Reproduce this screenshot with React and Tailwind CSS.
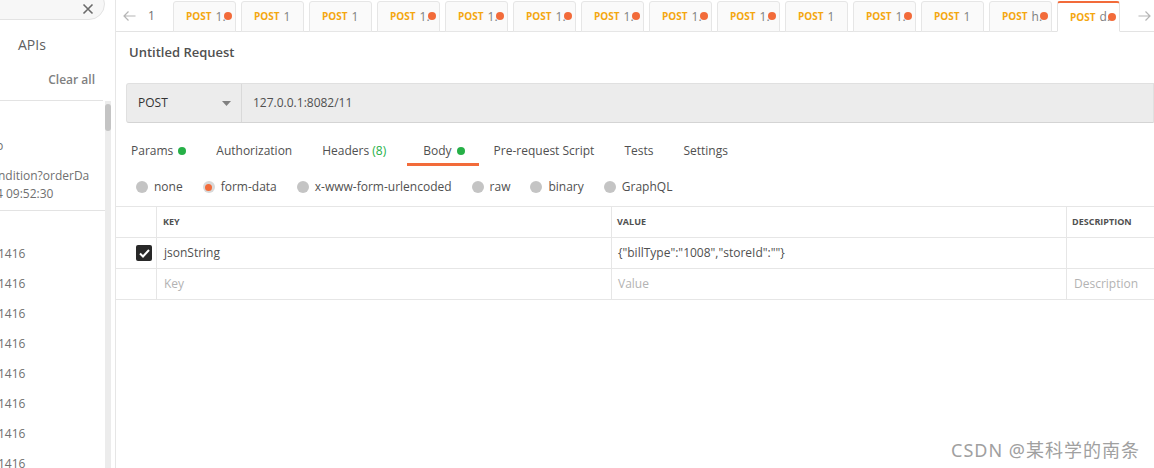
import React from "react";

const tabs = [
  { t: "1.", dot: true },
  { t: "1" },
  { t: "1" },
  { t: "1.", dot: true },
  { t: "1.", dot: true },
  { t: "1.", dot: true },
  { t: "1.", dot: true },
  { t: "1.", dot: true },
  { t: "1.", dot: true },
  { t: "1" },
  { t: "1.", dot: true },
  { t: "1" },
  { t: "h.", dot: true },
  { t: "d.", dot: true, active: true },
];

const Radio = ({ label, on }) => (
  <div className="flex items-center gap-[6px]">
    <span className={`w-[12px] h-[12px] rounded-full flex items-center justify-center ${on ? "bg-[#d9d9d9]" : "bg-[#c4c4c4]"}`}>
      {on && <span className="w-[7px] h-[7px] rounded-full bg-[#f26b3a]" />}
    </span>
    <span>{label}</span>
  </div>
);

export default function App() {
  return (
    <div className="w-[1154px] h-[468px] flex overflow-hidden bg-white text-[#505050]" style={{ fontFamily: '"Open Sans", "Noto Sans CJK SC", sans-serif' }}>
      {/* sidebar */}
      <div className="w-[116px] h-full shrink-0 border-r border-[#e6e6e6] flex flex-col overflow-hidden">
        <div className="shrink-0 -mt-[12px] -ml-[20px] mr-[10px] h-[32px] rounded-full border border-[#e3e3e3] bg-[#f7f7f7] flex items-end justify-end pr-[10px] pb-[4px]">
          <svg width="12" height="12" viewBox="0 0 12 12" className="text-[#6b6b6b]">
            <path d="M1.5 1.5 L10.5 10.5 M10.5 1.5 L1.5 10.5" stroke="currentColor" strokeWidth="1.6" />
          </svg>
        </div>
        <div className="shrink-0 pl-[18px] mt-[15px] text-[14px] text-[#606060] leading-[20px]">APIs</div>
        <div className="shrink-0 mt-[17px] pr-[20px] text-right text-[12px] font-semibold text-[#808080] leading-[16px]">Clear all</div>
        <div className="shrink-0 mt-[12px] mr-[12px] border-b border-[#e3e3e3]" />
        <div className="flex flex-1 min-h-0">
          <div className="flex-1 text-[12px] text-[#707070] overflow-hidden">
            <div className="mt-[36px] -ml-[4px] leading-[18px]">p</div>
            <div className="mt-[12px] -ml-[2px] leading-[18px] whitespace-nowrap">ndition?orderDa</div>
            <div className="-ml-[4px] leading-[18px] whitespace-nowrap">4 09:52:30</div>
            <div className="mt-[7px] border-b border-[#e3e3e3]" />
            <div className="mt-[34px] -ml-[2px] flex flex-col gap-[12px] leading-[18px]">
              {Array.from({ length: 8 }).map((_, i) => (
                <div key={i}>1416</div>
              ))}
            </div>
          </div>
          <div className="w-[6px] mr-[4px] bg-[#ececec] relative">
            <div className="absolute top-[3px] left-0 w-[6px] h-[27px] rounded-[3px] bg-[#c4c4c4]" />
          </div>
        </div>
      </div>

      {/* main */}
      <div className="flex-1 flex flex-col min-w-0">
        <div className="h-[32px] shrink-0 border-b border-[#e3e3e3] flex items-end">
          <div className="w-[57px] h-[31px] flex items-center gap-[12px] pl-[7px]">
            <svg width="13" height="12" viewBox="0 0 13 12" className="text-[#b5b5b5]">
              <path d="M12.5 6 H1 M5.5 1.5 L1 6 L5.5 10.5" stroke="currentColor" strokeWidth="1.2" fill="none" />
            </svg>
            <span className="text-[12px] text-[#707070]">1</span>
          </div>
          <div className="flex gap-[5px] -mb-[1px]">
            {tabs.map((tb, i) => (
              <div
                key={i}
                className={`w-[63px] h-[31px] rounded-t-[3px] border flex items-center pl-[12px] gap-[4px] ${
                  tb.active ? "bg-white border-[#e3e3e3] border-b-white border-t-[2px] border-t-[#f26b3a]" : "bg-[#fafafa] border-[#e6e6e6]"
                }`}
              >
                <span className="text-[10px] font-bold text-[#f4a70f]">POST</span>
                <span className="flex items-center text-[12px] text-[#808080]">
                  {tb.t}
                  {tb.dot && <span className="-ml-[2px] -mt-[1px] w-[8px] h-[8px] rounded-full bg-[#f26b3a]" />}
                </span>
              </div>
            ))}
          </div>
          <svg width="13" height="12" viewBox="0 0 13 12" className="text-[#b5b5b5] ml-[18px] mb-[9px]">
            <path d="M0.5 6 H12 M7.5 1.5 L12 6 L7.5 10.5" stroke="currentColor" strokeWidth="1.2" fill="none" />
          </svg>
        </div>

        <div className="pl-[13px] mt-[10px] text-[13px] font-semibold text-[#505050] leading-[20px]">Untitled Request</div>

        <div className="ml-[10px] mt-[21px] h-[40px] shrink-0 bg-[#ececec] border border-[#e0e0e0] border-b-[#d4d4d4] rounded-l-[3px] flex items-center text-[12px]">
          <div className="w-[115px] h-full flex items-center justify-between pl-[11px] pr-[10px] border-r border-[#d9d9d9]">
            <span className="text-[#333]">POST</span>
            <svg width="9" height="5" viewBox="0 0 9 5"><path d="M0 0 H9 L4.5 5Z" fill="#808080" /></svg>
          </div>
          <span className="pl-[11px] text-[#505050]">127.0.0.1:8082/11</span>
        </div>

        <div className="mt-[16px] shrink-0 flex items-end text-[12px] h-[27px] leading-[18px]">
          <div className="px-[15px] h-full pt-[3px] flex items-start gap-[5px]">
            <span>Params</span><span className="mt-[5px] w-[8px] h-[8px] rounded-full bg-[#26b047]" />
          </div>
          <div className="px-[15px] h-full pt-[3px]">Authorization</div>
          <div className="pl-[15px] pr-[21px] h-full pt-[3px]">Headers <span className="text-[#26b047]">(8)</span></div>
          <div className="pl-[16px] pr-[14px] h-full pt-[3px] flex items-start gap-[5px] border-b-[3px] border-[#f26b3a]">
            <span>Body</span><span className="mt-[5px] w-[8px] h-[8px] rounded-full bg-[#26b047]" />
          </div>
          <div className="px-[15px] h-full pt-[3px]">Pre-request Script</div>
          <div className="px-[15px] h-full pt-[3px]">Tests</div>
          <div className="px-[15px] h-full pt-[3px]">Settings</div>
        </div>

        <div className="mt-[12px] pl-[20px] flex items-center gap-[20px] text-[12px] leading-[18px]">
          <Radio label="none" />
          <Radio label="form-data" on />
          <Radio label="x-www-form-urlencoded" />
          <Radio label="raw" />
          <Radio label="binary" />
          <Radio label="GraphQL" />
        </div>

        <div className="mt-[10px] border-t border-[#e6e6e6] text-[12px]">
          <div className="flex h-[31px] border-b border-[#e6e6e6] items-center">
            <div className="w-[41px] h-full border-r border-[#e6e6e6]" />
            <div className="w-[455px] h-full border-r border-[#e6e6e6] flex items-center pl-[6px] text-[9px] font-bold text-[#505050]">KEY</div>
            <div className="w-[455px] h-full border-r border-[#e6e6e6] flex items-center pl-[5px] text-[9px] font-bold text-[#505050]">VALUE</div>
            <div className="flex-1 h-full flex items-center pl-[5px] text-[9px] font-bold text-[#505050] whitespace-nowrap">DESCRIPTION</div>
          </div>
          <div className="flex h-[31px] border-b border-[#e6e6e6] items-center">
            <div className="w-[41px] h-full border-r border-[#e6e6e6] flex items-center justify-end pr-[4px]">
              <span className="w-[16px] h-[16px] rounded-[2px] bg-[#282828] flex items-center justify-center">
                <svg width="11" height="9" viewBox="0 0 11 9"><path d="M1 4.5 L4 7.5 L10 1" stroke="white" strokeWidth="2" fill="none" /></svg>
              </span>
            </div>
            <div className="w-[455px] h-full border-r border-[#e6e6e6] flex items-center pl-[7px] text-[#505050]">jsonString</div>
            <div className="w-[455px] h-full border-r border-[#e6e6e6] flex items-center pl-[6px] text-[#505050] whitespace-nowrap">{'{"billType":"1008","storeId":""}'}</div>
            <div className="flex-1 h-full" />
          </div>
          <div className="flex h-[31px] border-b border-[#e6e6e6] items-center text-[#b3b3b3]">
            <div className="w-[41px] h-full border-r border-[#e6e6e6]" />
            <div className="w-[455px] h-full border-r border-[#e6e6e6] flex items-center pl-[7px]">Key</div>
            <div className="w-[455px] h-full border-r border-[#e6e6e6] flex items-center pl-[6px]">Value</div>
            <div className="flex-1 h-full flex items-center pl-[7px]">Description</div>
          </div>
        </div>

        <div className="flex-1 flex items-end justify-end pr-[14px] pb-[6px]">
          <span className="text-[18px] tracking-[1px] text-[#a0a0a0] leading-[24px]" style={{ fontFamily: '"Noto Sans", "Noto Sans CJK SC", sans-serif' }}>CSDN @某科学的南条</span>
        </div>
      </div>
    </div>
  );
}
